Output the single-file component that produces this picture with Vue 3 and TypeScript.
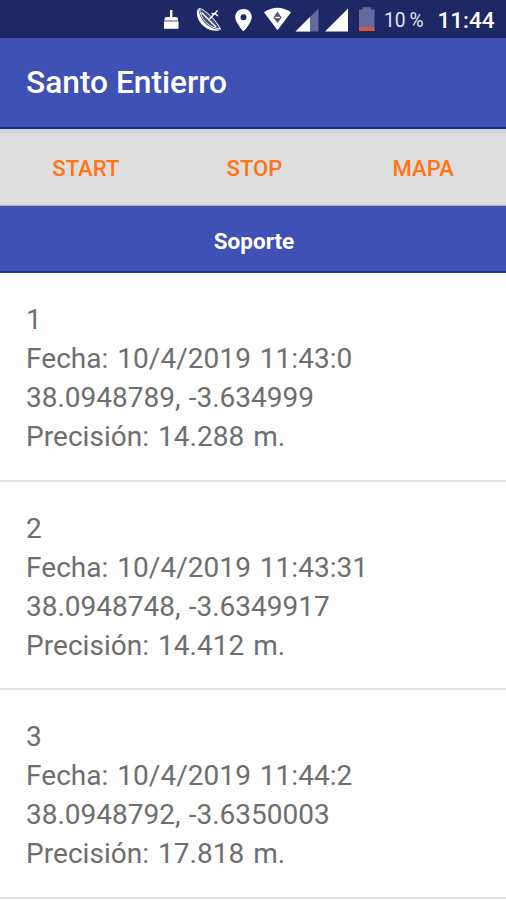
<script setup lang="ts">
interface Reading {
  id: number
  date: string
  position: string
  precision: string
}

const actions: string[] = ['START', 'STOP', 'MAPA']

const readings: Reading[] = [
  { id: 1, date: '10/4/2019 11:43:0', position: '38.0948789, -3.634999', precision: '14.288' },
  { id: 2, date: '10/4/2019 11:43:31', position: '38.0948748, -3.6349917', precision: '14.412' },
  { id: 3, date: '10/4/2019 11:44:2', position: '38.0948792, -3.6350003', precision: '17.818' },
]
</script>

<template>
  <div class="screen">
    <header class="status">
      <svg class="icons" width="226" height="38" viewBox="0 0 226 38" aria-hidden="true">
        <!-- cleaner -->
        <path d="M20 10h2.400v7h3.600q2 0 2 2.200v1.300H14.500v-1.300q0-2.200 2-2.200H20z" fill="#fff" />
        <path d="M14.500 20.500H28v1H14.500z" fill="#a9aec9" />
        <path d="M14 21.500h14.500v7.300H14z" fill="#fff" />
        <!-- satellite dish -->
        <path d="M48.500 8C45 12.500 47.500 21 53.500 26S67 32 71 29.500C64 30 58 26.500 54 22S48.800 12.500 48.500 8Z" fill="#fff" />
        <path d="M49.500 8.500C50 14 52 18.500 56 22.500S65 28.800 70.500 29C69 26 65 20 60.500 15.800S52 8.800 49.500 8.500Z" fill="#464e80" stroke="#fff" stroke-width="1" />
        <path d="M51.500 12.500L66 27M59.500 19l8-8.500M61.500 13.500l4 .5 2.500 2" fill="none" stroke="#fff" stroke-width="1.400" />
        <!-- location pin -->
        <path fill-rule="evenodd" d="M93.500 9c-4.700 0-8.300 3.500-8.300 8.100 0 5.700 8.300 14.500 8.300 14.500s8.300-8.800 8.300-14.500C101.800 12.500 98.200 9 93.500 9zm0 5.200a3 3 0 1 1 0 6 3 3 0 0 1 0-6z" fill="#fff" />
        <!-- wifi -->
        <path d="M114 12.300Q127.500 3.300 141 12.300L127.500 30.300Z" fill="#fff" />
        <path d="M127.500 11.500l4.200 6-4.200 5.500-4.200-5.500z" fill="#555a70" />
        <path d="M125.300 17.500h4.400" stroke="#fff" stroke-width="1.300" />
        <!-- mobile signal -->
        <path d="M168.500 8.500v23h-23z" fill="#626b9d" />
        <path d="M160 17v14.500h-14.500z" fill="#fff" />
        <path d="M198 8.500v23h-23z" fill="#fff" />
        <!-- battery -->
        <path d="M212.500 7.200h8.500v2.300h3.500v21.300h-15.500V9.500h3.500z" fill="#626a9e" />
        <path d="M209 27.300h15.500v3.500H209z" fill="#e5533d" />
      </svg>
      <span class="battery">10 %</span>
      <time class="clock">11:44</time>
    </header>
    <div class="appbar"><h1>Santo Entierro</h1></div>
    <nav class="actions">
      <button v-for="action in actions" :key="action" type="button">{{ action }}</button>
    </nav>
    <div class="section">Soporte</div>
    <ul class="list">
      <li v-for="reading in readings" :key="reading.id">
        <p>{{ reading.id }}</p>
        <p>Fecha: {{ reading.date }}</p>
        <p class="position">{{ reading.position }}</p>
        <p>Precisión: {{ reading.precision }} m.</p>
      </li>
    </ul>
  </div>
</template>

<style>
body {
  margin: 0;
  background: #fefefe;
}
</style>

<style scoped>
.screen {
  height: 900px;
  overflow: hidden;
  display: flex;
  flex-direction: column;
  background: #fefefe;
  font-family: Roboto, sans-serif;
}
.status {
  flex: none;
  height: 38px;
  padding-left: 150px;
  display: flex;
  align-items: center;
  background: #1e2864;
  color: #fff;
  white-space: nowrap;
}
.icons {
  flex: none;
}
.battery {
  margin: 2px 0 0 8px;
  width: 53.500px;
  font-size: 19.3px;
  word-spacing: -1px;
  color: #e4e6ef;
}
.clock {
  margin-top: 2px;
  font-size: 22.5px;
  font-weight: 500;
}
.appbar {
  flex: none;
  box-sizing: border-box;
  height: 90.500px;
  padding: 2px 0 0 26px;
  display: flex;
  align-items: center;
  background: #3f51b5;
  border-bottom: 2px solid #142c91;
}
h1 {
  margin: 0;
  font-size: 31.7px;
  font-weight: 500;
  line-height: 36px;
  color: #fff;
}
.actions {
  flex: none;
  height: 77px;
  display: grid;
  grid-template-columns: repeat(3, 1fr);
  background: linear-gradient(#d2d2d2, #dedede 8px, #dedede 75px, #a2a5bd);
}
button {
  border: 0;
  padding: 1px 0 0 3px;
  background: none;
  font: 500 22.1px Roboto, sans-serif;
  color: #ff7414;
}
.section {
  flex: none;
  box-sizing: border-box;
  height: 67.500px;
  padding: 6px 0 0 2px;
  display: flex;
  align-items: center;
  justify-content: center;
  background: #3f51b5;
  border-bottom: 2px solid #1b3b9b;
  color: #fff;
  font-size: 22.5px;
  font-weight: 700;
}
.list {
  margin: 0;
  padding: 0;
  list-style: none;
}
li {
  box-sizing: border-box;
  height: 208.600px;
  padding: 27px 26px 0;
  border-bottom: 2px solid #e2e2e2;
}
p {
  margin: 0;
  font-size: 28px;
  line-height: 39px;
  letter-spacing: 0.05px;
  word-spacing: 1.8px;
  color: #6e6e6e;
}
.position {
  letter-spacing: 0;
  word-spacing: 1.2px;
}
</style>
